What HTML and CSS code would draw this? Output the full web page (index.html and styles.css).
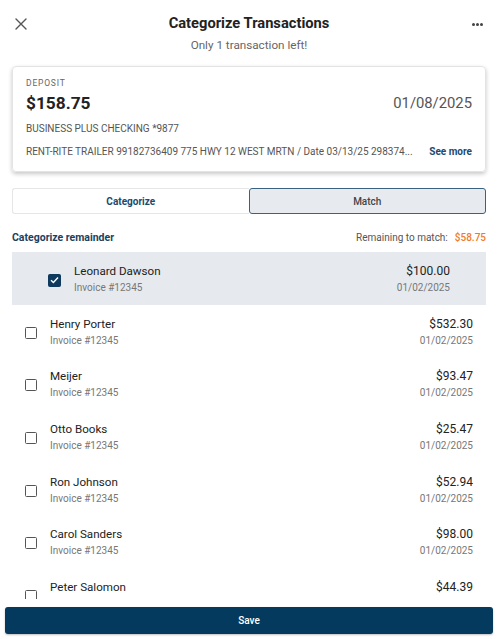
FILE: index.html
```html
<!DOCTYPE html>
<html>
<head>
<meta charset="utf-8">
<link rel="stylesheet" href="styles.css">
</head>
<body>
<div class="screen">
  <header class="header">
    <button class="icon-btn close" aria-label="Close">
      <svg width="12" height="12" viewBox="0 0 12 12"><path d="M1 1L11 11M11 1L1 11" stroke="#555" stroke-width="1.4" fill="none" stroke-linecap="round"/></svg>
    </button>
    <div class="titles">
      <h1 class="title">Categorize Transactions</h1>
      <p class="subtitle">Only 1 transaction left!</p>
    </div>
    <button class="icon-btn more" aria-label="More">
      <span class="dot"></span><span class="dot"></span><span class="dot"></span>
    </button>
  </header>

  <section class="card">
    <div class="card-label">DEPOSIT</div>
    <div class="card-row">
      <span class="card-amount">$158.75</span>
      <span class="card-date">01/08/2025</span>
    </div>
    <div class="card-account">BUSINESS PLUS CHECKING *9877</div>
    <div class="card-desc">
      <span class="desc-text">RENT-RITE TRAILER 99182736409 775 HWY 12 WEST MRTN / Date 03/13/25 298374...</span>
      <a class="see-more">See more</a>
    </div>
  </section>

  <div class="tabs">
    <div class="tab tab-left">Categorize</div>
    <div class="tab tab-right active">Match</div>
  </div>

  <div class="remainder">
    <span class="remainder-link">Categorize remainder</span>
    <span class="remainder-info">Remaining to match:<span class="remainder-amt">$58.75</span></span>
  </div>

  <ul class="list">
    <li class="row selected">
      <span class="check checked"><svg width="9" height="8" viewBox="0 0 9 8"><path d="M1 4.2L3.4 6.5L8 1.5" stroke="#fff" stroke-width="1.4" fill="none"/></svg></span>
      <div class="row-main"><div class="name">Leonard Dawson</div><div class="sub">Invoice #12345</div></div>
      <div class="row-side"><div class="amt">$100.00</div><div class="sub">01/02/2025</div></div>
    </li>
    <li class="row">
      <span class="check"></span>
      <div class="row-main"><div class="name">Henry Porter</div><div class="sub">Invoice #12345</div></div>
      <div class="row-side"><div class="amt">$532.30</div><div class="sub">01/02/2025</div></div>
    </li>
    <li class="row">
      <span class="check"></span>
      <div class="row-main"><div class="name">Meijer</div><div class="sub">Invoice #12345</div></div>
      <div class="row-side"><div class="amt">$93.47</div><div class="sub">01/02/2025</div></div>
    </li>
    <li class="row">
      <span class="check"></span>
      <div class="row-main"><div class="name">Otto Books</div><div class="sub">Invoice #12345</div></div>
      <div class="row-side"><div class="amt">$25.47</div><div class="sub">01/02/2025</div></div>
    </li>
    <li class="row">
      <span class="check"></span>
      <div class="row-main"><div class="name">Ron Johnson</div><div class="sub">Invoice #12345</div></div>
      <div class="row-side"><div class="amt">$52.94</div><div class="sub">01/02/2025</div></div>
    </li>
    <li class="row">
      <span class="check"></span>
      <div class="row-main"><div class="name">Carol Sanders</div><div class="sub">Invoice #12345</div></div>
      <div class="row-side"><div class="amt">$98.00</div><div class="sub">01/02/2025</div></div>
    </li>
    <li class="row">
      <span class="check"></span>
      <div class="row-main"><div class="name">Peter Salomon</div><div class="sub">Invoice #12345</div></div>
      <div class="row-side"><div class="amt">$44.39</div><div class="sub">01/02/2025</div></div>
    </li>
  </ul>

  <footer class="footer">
    <button class="save">Save</button>
  </footer>
</div>
</body>
</html>
```

FILE: styles.css
```css
* { box-sizing: border-box; }
html, body { margin: 0; padding: 0; }
body {
  width: 500px;
  height: 639px;
  overflow: hidden;
  background: #fff;
  font-family: Roboto, "Liberation Sans", sans-serif;
  color: #222;
}
.screen {
  position: relative;
  width: 500px;
  height: 639px;
  overflow: hidden;
}
.header {
  display: flex;
  align-items: flex-start;
  padding: 14px 14px 0 14px;
  height: 66px;
}
.icon-btn {
  border: 0;
  background: none;
  padding: 0;
  width: 14px;
  height: 20px;
  display: flex;
  align-items: center;
  justify-content: center;
  cursor: pointer;
}
.more { gap: 1px; width: 14px; margin-left: auto; margin-right: 2px; }
.dot { width: 3px; height: 3px; border-radius: 50%; background: #444; }
.titles { flex: 1; text-align: center; }
.title {
  margin: 0;
  font-size: 14.7px;
  line-height: 18px;
  font-weight: 700;
  color: #222;
}
.subtitle {
  margin: 5px 0 0 0;
  font-size: 11.7px;
  line-height: 16px;
  color: #666;
}
.card {
  margin: 0 14px 0 12px;
  border: 1px solid #e4e4e4;
  border-radius: 4px;
  box-shadow: 0 2px 4px rgba(0,0,0,0.22);
  padding: 11px 13px 0 13px;
  height: 106px;
}
.card-label {
  font-size: 8.5px;
  letter-spacing: 0.8px;
  color: #666;
  line-height: 10px;
}
.card-row {
  display: flex;
  justify-content: space-between;
  align-items: center;
  margin-top: 4px;
  height: 22px;
}
.card-amount { font-size: 17.3px; font-weight: 700; color: #222; }
.card-date { font-size: 14.8px; color: #555; }
.card-account {
  margin-top: 9px;
  font-size: 10px;
  line-height: 12px;
  color: #555;
}
.card-desc {
  margin-top: 11px;
  display: flex;
  justify-content: space-between;
  align-items: center;
  font-size: 10px;
  line-height: 12px;
}
.desc-text { color: #555; white-space: nowrap; }
.see-more { color: #1d4a6f; font-weight: 700; font-size: 10px; }
.tabs {
  display: flex;
  margin: 16px 14px 0 12px;
  height: 26px;
}
.tab {
  flex: 1;
  display: flex;
  align-items: center;
  justify-content: center;
  font-size: 10px;
  font-weight: 700;
}
.tab-left {
  border: 1px solid #e6e6e6;
  border-right: 0;
  border-radius: 3px 0 0 3px;
  color: #1d4a6f;
}
.tab-right.active {
  border: 1.5px solid #3a6180;
  background: #e7ebef;
  border-radius: 3px;
  color: #444;
  font-weight: 500;
}
.remainder {
  display: flex;
  justify-content: space-between;
  align-items: center;
  margin: 0 14px 0 12px;
  height: 46px;
  font-size: 10px;
}
.remainder-link { color: #1c3f5e; font-weight: 700; font-size: 10.5px; }
.remainder-info { color: #555; }
.remainder-amt { color: #f07a2a; font-weight: 500; margin-left: 7px; }
.list {
  list-style: none;
  margin: -8px 14px 0 12px;
  padding: 0;
}
.row {
  display: flex;
  align-items: center;
  height: 52.6px;
  padding: 2px 13px 0 13px;
}
.row.selected {
  background: #e6eaee;
  padding: 2px 36px 0 36px;
}
.check {
  width: 12px;
  height: 12px;
  border: 1.4px solid #555;
  border-radius: 1.5px;
  flex: none;
  margin-top: 2px;
  display: flex;
  align-items: center;
  justify-content: center;
}
.check.checked {
  width: 13px;
  height: 13px;
  background: #0e3a5d;
  border-color: #0e3a5d;
}
.row-main { margin-left: 13px; flex: 1; }
.row-side { text-align: right; }
.name { font-size: 11.6px; line-height: 16px; color: #222; }
.amt { font-size: 12px; line-height: 16px; color: #222; }
.sub { font-size: 10px; line-height: 14px; color: #777; margin-top: 2px; }
.footer {
  position: absolute;
  left: 0;
  right: 0;
  bottom: 0;
  height: 40px;
  background: #fff;
  padding: 8px 7px 5px 5px;
}
.save {
  width: 100%;
  height: 27px;
  border: 0;
  border-radius: 3px;
  background: #033a5d;
  color: #fff;
  font-family: Roboto, "Liberation Sans", sans-serif;
  font-size: 10px;
  font-weight: 500;
  box-shadow: 0 1px 2px rgba(0,0,0,0.25);
}
```
